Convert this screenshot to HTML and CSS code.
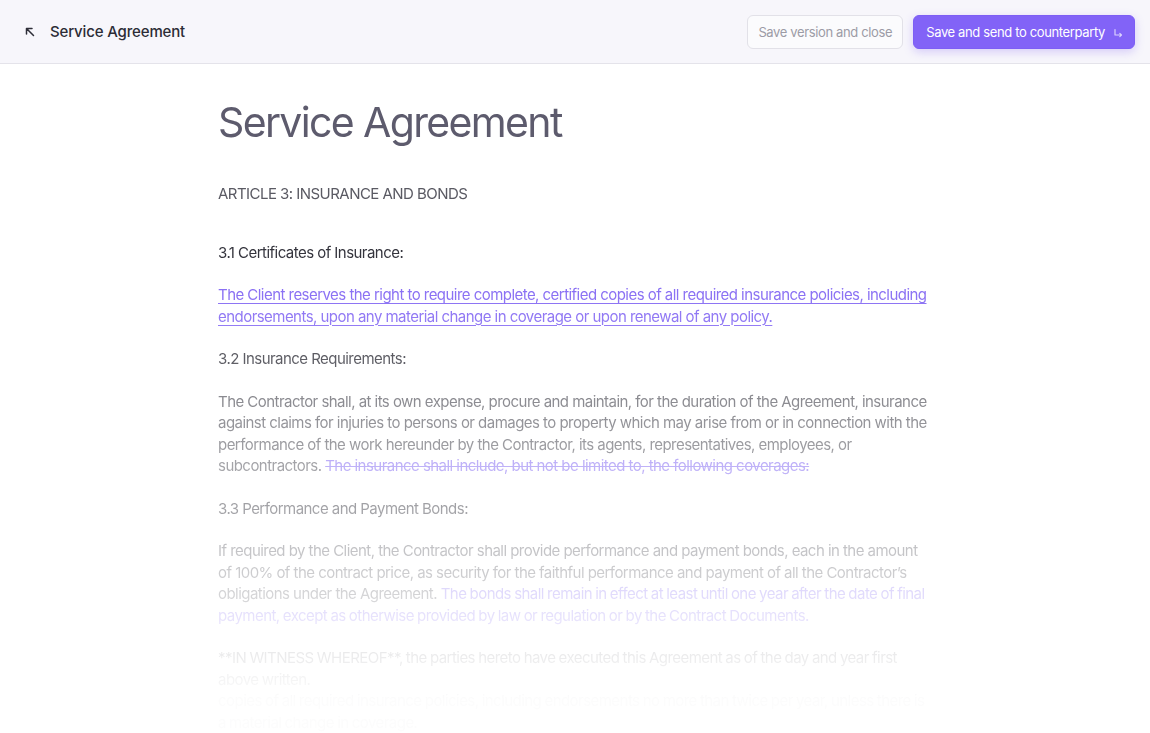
FILE: index.html
```html
<!DOCTYPE html>
<html lang="en">
<head>
<meta charset="utf-8">
<title>Service Agreement</title>
<link rel="stylesheet" href="styles.css">
</head>
<body>
<header class="topbar">
  <div class="topbar-left">
    <button class="back" aria-label="Back">
      <svg width="12" height="12" viewBox="0 0 12 12" fill="none" stroke="#2e2e38" stroke-width="1.5" stroke-linecap="round" stroke-linejoin="round"><path d="M9.5 9.5L2.5 2.5M2.5 8V2.5H8"/></svg>
    </button>
    <span class="doc-name">Service Agreement</span>
  </div>
  <div class="topbar-actions">
    <button class="btn btn-ghost">Save version and close</button>
    <button class="btn btn-primary">Save and send to counterparty
      <svg class="btn-icon" width="10" height="10" viewBox="0 0 10 10" fill="none" stroke="currentColor" stroke-width="1.2" stroke-linecap="round" stroke-linejoin="round"><path d="M2 1.5V7H8.5M6.8 5.3L8.5 7L6.8 8.7"/></svg>
    </button>
  </div>
</header>
<main class="doc">
  <article class="doc-body">
    <h1 class="doc-title">Service Agreement</h1>
    <h2 class="article-head">ARTICLE 3: INSURANCE AND BONDS</h2>
    <h3 class="section-head">3.1 Certificates of Insurance:</h3>
    <p><span class="ins">The Client reserves the right to require complete, certified copies of all required insurance policies, including endorsements, upon any material change in coverage or upon renewal of any policy.</span></p>
    <h3 class="section-head">3.2 Insurance Requirements:</h3>
    <p>The Contractor shall, at its own expense, procure and maintain, for the duration of the Agreement, insurance against claims for injuries to persons or damages to property which may arise from or in connection with the performance of the work hereunder by the Contractor, its agents, representatives, employees, or subcontractors. <span class="del">The insurance shall include, but not be limited to, the following coverages:</span></p>
    <h3 class="section-head">3.3 Performance and Payment Bonds:</h3>
    <p>If required by the Client, the Contractor shall provide performance and payment bonds, each in the amount of 100% of the contract price, as security for the faithful performance and payment of all the Contractor’s obligations under the Agreement. <span class="add">The bonds shall remain in effect at least until one year after the date of final payment, except as otherwise provided by law or regulation or by the Contract Documents.</span></p>
    <p class="tail">**IN WITNESS WHEREOF**, the parties hereto have executed this Agreement as of the day and year first above written.<br>copies of all required insurance policies, including endorsements no more than twice per year, unless there is a material change in coverage.</p>
  </article>
</main>
</body>
</html>
```
FILE: styles.css
```css
* { box-sizing: border-box; }
html, body { margin: 0; padding: 0; }
body {
  background: #ffffff;
  font-family: Inter, "Noto Sans", "Liberation Sans", sans-serif;
  color: #34343e;
  height: 733px;
  overflow: hidden;
}
.topbar {
  height: 64px;
  background: #f7f6fb;
  border-bottom: 1px solid #e4e3ea;
  display: flex;
  align-items: center;
  justify-content: space-between;
  padding: 0 15px 0 22px;
}
.topbar-left { display: flex; align-items: center; gap: 12px; }
.back {
  border: 0; background: none; padding: 0;
  width: 16px; height: 16px;
  display: flex; align-items: center; justify-content: center;
  margin-top: 1px;
}
.doc-name {
  font-size: 15px;
  font-weight: 450;
  color: #2c2c36;
  letter-spacing: -0.01em;
}
.topbar-actions { display: flex; gap: 10px; align-items: center; }
.btn {
  font-family: inherit;
  font-size: 13px;
  height: 34px;
  border-radius: 6px;
  display: flex;
  align-items: center;
  gap: 8px;
  white-space: nowrap;
  letter-spacing: -0.028em;
}
.btn-ghost {
  background: #fbfbfd;
  border: 1px solid #e2e1e8;
  color: #9c9ba6;
  padding: 0 10px;
}
.btn-primary {
  background: #8263f7;
  border: 1px solid #7d5ef5;
  color: #ffffff;
  padding: 0 11px 0 12px;
  box-shadow: 0 3px 10px rgba(124, 94, 245, 0.28);
}
.btn-icon { color: rgba(255,255,255,0.7); margin-top: 2px; }

.doc {
  display: flex;
  justify-content: center;
  -webkit-mask-image: linear-gradient(to bottom, #000 0, #000 205px, rgba(0,0,0,0.02) 635px, rgba(0,0,0,0.02) 100%);
  mask-image: linear-gradient(to bottom, #000 0, #000 205px, rgba(0,0,0,0.02) 635px, rgba(0,0,0,0.02) 100%);
}
.doc-body {
  width: 714px;
  padding-top: 33px;
  font-size: 15px;
  line-height: 21.5px;
  letter-spacing: -0.036em;
}
.doc-title {
  font-size: 41px;
  font-weight: 400;
  line-height: 50px;
  color: #5d5b6d;
  letter-spacing: -0.04em;
  margin: 0 0 36px;
}
.article-head {
  font-size: 15px;
  font-weight: 400;
  color: #5a5a63;
  margin: 0 0 37px;
  line-height: 21.5px;
}
.section-head {
  font-size: 15px;
  font-weight: 400;
  color: #34343d;
  margin: 0 0 21px;
  line-height: 21.5px;
}
p { margin: 0 0 21px; color: #5a5a62; }
.tail { word-spacing: -0.5px; }
.ins {
  color: #8469f3;
  text-decoration: underline;
  text-decoration-thickness: 1px;
  text-underline-offset: 3px;
}
.del {
  color: #8a72f2;
  text-decoration: line-through;
  text-decoration-thickness: 1px;
}
.add {
  color: #8a72f2;
  word-spacing: -0.5px;
}
```
